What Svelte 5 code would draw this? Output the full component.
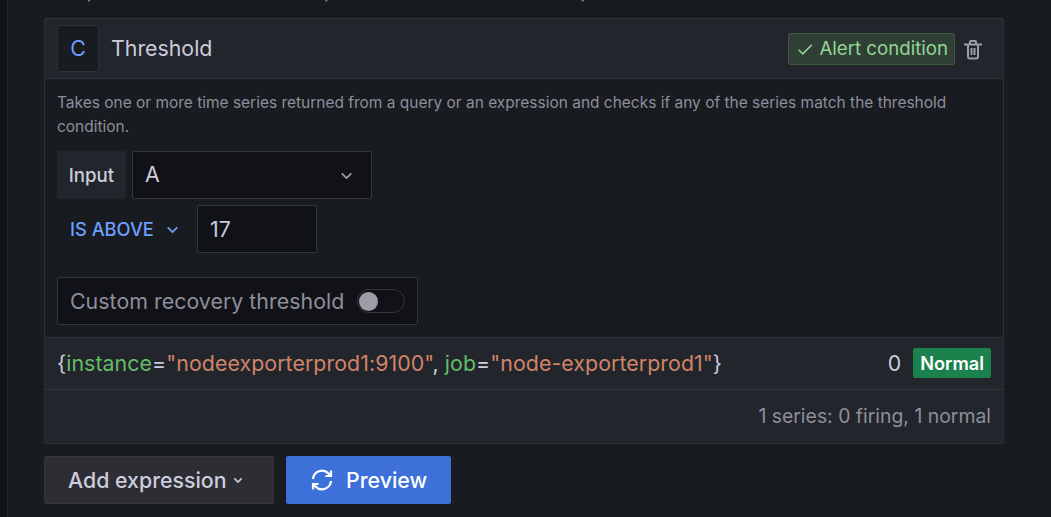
<script>
  const series = [
    { key: 'instance', value: 'nodeexporterprod1:9100' },
    { key: 'job', value: 'node-exporterprod1' }
  ];
</script>

<div class="page">
  <div class="content">
    <p class="clipped">Manipulate data returned from queries with math and other operations.</p>

    <section class="card">
      <header class="card-head">
        <div class="ref-id">C</div>
        <span class="card-title">Threshold</span>
        <div class="head-right">
          <span class="alert-badge">
            <svg width="18" height="18" viewBox="0 0 24 24" fill="none" stroke="currentColor" stroke-width="2"><path d="M3.500 13l5.500 5.500L21 6.500" /></svg>
            Alert condition
          </span>
          <button class="trash" aria-label="Remove">
            <svg width="24" height="24" viewBox="0 0 24 24" fill="none" stroke="currentColor" stroke-width="2"><path d="M3 7.500h18M9 7V5a1 1 0 0 1 1-1h4a1 1 0 0 1 1 1v2M7 7.500v12a2 2 0 0 0 2 2h6a2 2 0 0 0 2-2v-12M10.500 11v7M13.500 11v7" /></svg>
          </button>
        </div>
      </header>

      <div class="card-body">
        <p class="desc">Takes one or more time series returned from a query or an expression and checks if any of the series match the threshold condition.</p>
        <div class="row">
          <div class="label">Input</div>
          <div class="select">
            <span>A</span>
            <svg width="21" height="21" viewBox="0 0 24 24" fill="none" stroke="currentColor" stroke-width="2"><path d="M6.500 9.500l5.500 5.500 5.500-5.500" /></svg>
          </div>
        </div>
        <div class="row">
          <div class="op">
            IS ABOVE
            <svg width="21" height="21" viewBox="0 0 24 24" fill="none" stroke="currentColor" stroke-width="2"><path d="M6.500 9.500l5.500 5.500 5.500-5.500" /></svg>
          </div>
          <div class="num">17</div>
        </div>
        <div class="recovery">
          <span class="recovery-label">Custom recovery threshold</span>
          <span class="switch"><span class="knob"></span></span>
        </div>
      </div>

      <div class="series">
        <span class="labels">{'{'}{#each series as s, i}{#if i > 0}{', '}{/if}<span class="k">{s.key}</span>=<span class="v">"{s.value}"</span>{/each}{'}'}</span>
        <span class="val">0</span>
        <span class="state">Normal</span>
      </div>
      <div class="summary">1 series: 0 firing, 1 normal</div>
    </section>

    <div class="actions">
      <button class="btn secondary">
        Add expression
        <svg width="16" height="16" viewBox="0 0 24 24" fill="none" stroke="currentColor" stroke-width="2.400"><path d="M6.500 9.500l5.500 5.500 5.500-5.500" /></svg>
      </button>
      <button class="btn primary">
        <svg width="24" height="24" viewBox="0 0 24 24" fill="none" stroke="currentColor" stroke-width="2.200"><path d="M3 11a9 9 0 0 1 15.500-5.500L21 8M21 2.500V8h-5.500M21 13a9 9 0 0 1-15.500 5.500L3 16M3 21.500V16h5.500" /></svg>
        Preview
      </button>
    </div>
  </div>
</div>

<style>
  :global(body) {
    margin: 0;
    background: #111217;
    font-family: Inter, "Liberation Sans", sans-serif;
  }

  .page {
    height: 517px;
    overflow: hidden;
    margin-left: 7px;
    border-left: 1px solid #25272d;
    background: #181b1f;
    color: #ccccdc;
  }

  .content {
    width: 960px;
    margin-left: 36px;
  }

  .clipped {
    margin: -20px 0 14px 0;
    height: 24px;
    line-height: 24px;
    font-size: 18.670px;
    color: #8e8e9c;
    white-space: nowrap;
  }

  .card {
    border: 1px solid #2f3137;
    border-radius: 2px;
    background: #22252b;
  }

  .card-head {
    display: flex;
    align-items: center;
    gap: 12px;
    height: 59px;
    padding: 0 18px 0 12px;
    border-bottom: 1px solid #34363c;
  }

  .ref-id {
    display: flex;
    align-items: center;
    justify-content: center;
    width: 40px;
    height: 44px;
    padding-bottom: 1px;
    border: 1px solid #2f3137;
    border-radius: 2px;
    background: #181b1f;
    color: #6e9fff;
    font-size: 21.330px;
  }

  .card-title {
    padding-bottom: 2px;
    font-size: 21.330px;
    color: #ccccdc;
  }

  .head-right {
    display: flex;
    align-items: center;
    gap: 6px;
    margin-left: auto;
  }

  .alert-badge {
    display: flex;
    align-items: center;
    gap: 5px;
    height: 32px;
    box-sizing: border-box;
    padding: 0 6px 0 7px;
    border: 1px solid #3b5a3c;
    border-radius: 2px;
    background: #2f3f36;
    color: #93d694;
    font-size: 18.670px;
  }

  .trash {
    display: flex;
    padding: 0;
    border: none;
    background: none;
    color: #9d9da8;
  }

  .card-body {
    padding: 12px;
    background: #181b1f;
  }

  .desc {
    margin: 0 0 12px;
    font-size: 15.470px;
    line-height: 24px;
    color: #8e8e9c;
  }

  .row {
    display: flex;
    gap: 6px;
    margin-bottom: 6px;
  }

  .label {
    display: flex;
    align-items: center;
    justify-content: center;
    width: 69px;
    height: 48px;
    border-radius: 2px;
    background: #22252b;
    font-size: 18.670px;
    font-weight: 500;
  }

  .select {
    display: flex;
    align-items: center;
    justify-content: space-between;
    box-sizing: border-box;
    width: 240px;
    height: 48px;
    padding: 0 14px 0 12px;
    border: 1px solid #34363c;
    border-radius: 2px;
    background: #111217;
    font-size: 21.330px;
  }

  .select span {
    padding-bottom: 2px;
  }

  .select svg {
    color: #9d9da8;
  }

  .op {
    display: flex;
    align-items: center;
    gap: 8px;
    width: 134px;
    padding-left: 13px;
    box-sizing: border-box;
    height: 48px;
    color: #6e9fff;
    font-size: 18.250px;
    font-weight: 500;
  }

  .num {
    display: flex;
    align-items: center;
    box-sizing: border-box;
    width: 120px;
    height: 48px;
    padding-left: 12px;
    border: 1px solid #34363c;
    border-radius: 2px;
    background: #111217;
    font-size: 21.330px;
  }

  .recovery {
    display: flex;
    align-items: center;
    gap: 13px;
    box-sizing: border-box;
    width: 361px;
    height: 48px;
    margin-top: 24px;
    padding: 0 12px;
    border: 1px solid #34363c;
    border-radius: 2px;
    background: #111217;
    color: #8e8e9c;
    font-size: 21.330px;
    letter-spacing: 0.04px;
  }

  .recovery-label {
    white-space: nowrap;
  }

  .switch {
    display: flex;
    flex-shrink: 0;
    align-items: center;
    box-sizing: border-box;
    width: 48px;
    height: 24px;
    padding-left: 1px;
    border: 1px solid #34363c;
    border-radius: 12px;
  }

  .knob {
    width: 19px;
    height: 19px;
    border-radius: 50%;
    background: #9d9da8;
  }

  .series {
    display: flex;
    align-items: center;
    height: 50px;
    padding: 0 12px 1px;
    border-top: 1px solid #34363c;
    font-size: 21.330px;
  }

  .labels {
    letter-spacing: 0.07px;
  }

  .k { color: #63bd66; }
  .v { color: #d08468; }

  .val {
    margin-left: auto;
    margin-right: 12px;
  }

  .state {
    padding: 0 7px;
    height: 30px;
    line-height: 30px;
    border-radius: 2px;
    background: #1b814d;
    color: #fff;
    font-size: 18.200px;
    font-weight: 600;
  }

  .summary {
    height: 53px;
    line-height: 53px;
    text-align: right;
    padding-right: 12px;
    border-top: 1px solid #34363c;
    color: #8e8e9c;
    font-size: 19.400px;
  }

  .actions {
    display: flex;
    gap: 12px;
    margin-top: 12px;
  }

  .btn {
    display: flex;
    align-items: center;
    height: 48px;
    border-radius: 2px;
    font-family: inherit;
    font-size: 21.330px;
    font-weight: 500;
  }

  .secondary {
    gap: 3px;
    width: 230px;
    padding: 0 0 0 23px;
    border: 1px solid #34363c;
    background: #2c2e33;
    color: #ccccdc;
  }

  .primary {
    gap: 12px;
    width: 165px;
    padding: 0 0 0 24px;
    border: none;
    background: #3d71d9;
    color: #fff;
  }
</style>
